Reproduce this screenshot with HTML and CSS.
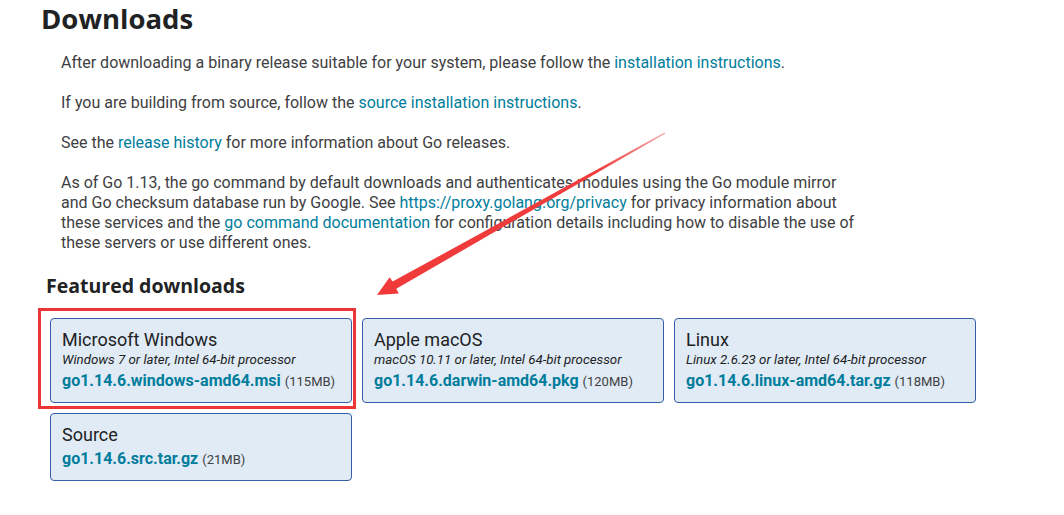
FILE: index.html
```html
<!DOCTYPE html>
<html>
<head>
<meta charset="utf-8">
<link rel="stylesheet" href="styles.css">
</head>
<body>
<div class="page">
  <h1 class="title">Downloads</h1>
  <p class="para">After downloading a binary release suitable for your system, please follow the <a class="link" href="#">installation instructions</a>.</p>
  <p class="para">If you are building from source, follow the <a class="link" href="#">source installation instructions</a>.</p>
  <p class="para">See the <a class="link" href="#">release history</a> for more information about Go releases.</p>
  <p class="para">As of Go 1.13, the go command by default downloads and authenticates modules using the Go module mirror and Go checksum database run by Google. See <a class="link" href="#">https://proxy.golang.org/privacy</a> for privacy information about these services and the <a class="link" href="#">go command documentation</a> for configuration details including how to disable the use of these servers or use different ones.</p>
  <h2 class="subtitle">Featured downloads</h2>
  <div class="cards">
    <div class="card card-marked">
      <div class="card-title">Microsoft Windows</div>
      <div class="card-desc">Windows 7 or later, Intel 64-bit processor</div>
      <div class="card-file"><a class="file-link" href="#">go1.14.6.windows-amd64.msi</a> <span class="size">(115MB)</span></div>
      <div class="highlight"></div>
    </div>
    <div class="card">
      <div class="card-title">Apple macOS</div>
      <div class="card-desc">macOS 10.11 or later, Intel 64-bit processor</div>
      <div class="card-file"><a class="file-link" href="#">go1.14.6.darwin-amd64.pkg</a> <span class="size">(120MB)</span></div>
    </div>
    <div class="card">
      <div class="card-title">Linux</div>
      <div class="card-desc">Linux 2.6.23 or later, Intel 64-bit processor</div>
      <div class="card-file"><a class="file-link" href="#">go1.14.6.linux-amd64.tar.gz</a> <span class="size">(118MB)</span></div>
    </div>
    <div class="card">
      <div class="card-title">Source</div>
      <div class="card-file"><a class="file-link" href="#">go1.14.6.src.tar.gz</a> <span class="size">(21MB)</span></div>
    </div>
  </div>
  <svg class="arrow" width="1064" height="515" viewBox="0 0 1064 515">
    <defs>
      <linearGradient id="ag" x1="665" y1="133" x2="380" y2="293" gradientUnits="userSpaceOnUse">
        <stop offset="0" stop-color="#f4a0a0"/>
        <stop offset="0.25" stop-color="#f03c3c"/>
        <stop offset="1" stop-color="#f03a3a"/>
      </linearGradient>
    </defs>
    <polygon fill="url(#ag)" points="664.7,132.5 392.6,281.6 389.6,277.2 377,295 398.8,293.4 396.3,288.7 665.3,133.5"/>
  </svg>
</div>
</body>
</html>
```
FILE: styles.css
```css
html, body {
  margin: 0;
  padding: 0;
  background: #ffffff;
}
.page {
  position: relative;
  width: 1064px;
  height: 515px;
  overflow: hidden;
  font-family: Roboto, "Liberation Sans", sans-serif;
  color: #3e4042;
}
.title {
  margin: 0 0 15px 41px;
  font-family: "Open Sans", "DejaVu Sans", sans-serif;
  font-weight: 700;
  font-size: 27.5px;
  line-height: 38px;
  color: #202224;
}
.para {
  margin: 0 0 20px 61px;
  max-width: 800px;
  font-size: 16px;
  line-height: 20px;
}
.link {
  color: #007d9c;
  text-decoration: none;
}
.subtitle {
  margin: 21px 0 20px 46px;
  font-family: "Open Sans", "DejaVu Sans", sans-serif;
  font-weight: 700;
  font-size: 19.5px;
  line-height: 24px;
  color: #202224;
}
.cards {
  display: grid;
  grid-template-columns: repeat(3, 302px);
  gap: 10px;
  margin-left: 50px;
  align-items: start;
}
.card {
  position: relative;
  box-sizing: border-box;
  background: #e0ebf5;
  border: 1px solid #375eab;
  border-radius: 4px;
  padding: 10px 11px 9px;
}
.card-title {
  font-size: 18px;
  line-height: 22px;
  color: #202224;
}
.card-desc {
  font-size: 13.3px;
  line-height: 17px;
  font-style: italic;
  color: #202224;
}
.card-file {
  padding-top: 1px;
  font-size: 16px;
  line-height: 24px;
}
.file-link {
  color: #007d9c;
  font-weight: 700;
  text-decoration: none;
}
.size {
  font-size: 13px;
  line-height: 1;
  color: #3e4042;
}
.highlight {
  position: absolute;
  left: -13px;
  top: -11px;
  right: -5px;
  bottom: -7px;
  border: 3px solid #ee3535;
  pointer-events: none;
}
.arrow {
  position: absolute;
  left: 0;
  top: 0;
  pointer-events: none;
}
```
